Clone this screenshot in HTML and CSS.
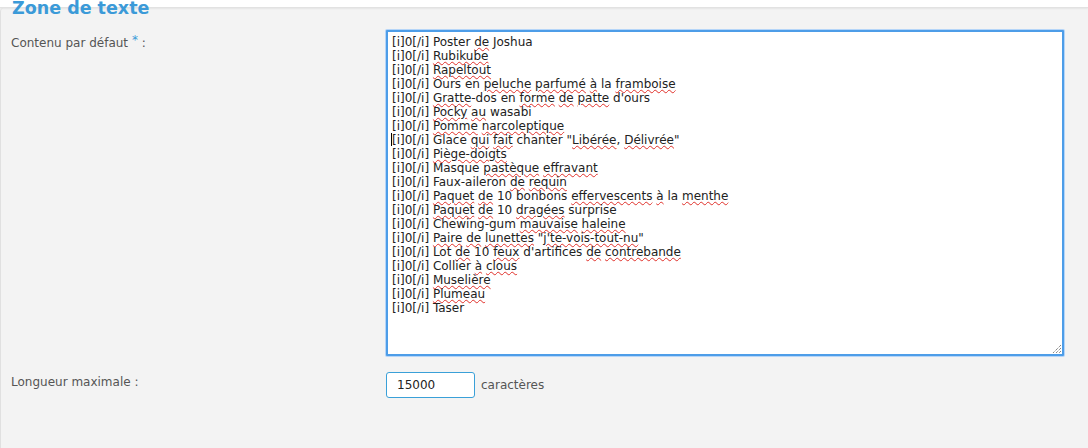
FILE: index.html
```html
<!DOCTYPE html>
<html lang="fr">
<head>
<meta charset="utf-8">
<title>Zone de texte</title>
<link rel="stylesheet" href="styles.css">
</head>
<body>
<div class="top"></div>
<fieldset class="box">
  <legend class="legend">Zone de texte</legend>
  <div class="row">
    <div class="label">Contenu par défaut <span class="req">*</span> :</div>
    <div class="field">
      <div class="area" role="textbox" aria-multiline="true">
<div>[i]0[/i] Poster <span class="sp">de</span> Joshua</div>
<div>[i]0[/i] <span class="sp">Rubikube</span></div>
<div>[i]0[/i] <span class="sp">Rapeltout</span></div>
<div>[i]0[/i] Ours en <span class="sp">peluche</span> <span class="sp">parfumé</span> <span class="sp">à</span> la <span class="sp">framboise</span></div>
<div>[i]0[/i] <span class="sp">Gratte</span>-dos en <span class="sp">forme</span> <span class="sp">de</span> <span class="sp">patte</span> d'ours</div>
<div>[i]0[/i] <span class="sp">Pocky</span> <span class="sp">au</span> wasabi</div>
<div>[i]0[/i] <span class="sp">Pomme</span> <span class="sp">narcoleptique</span></div>
<div><span class="caret"></span>[i]0[/i] Glace <span class="sp">qui</span> <span class="sp">fait</span> chanter "<span class="sp">Libérée</span>, <span class="sp">Délivrée</span>"</div>
<div>[i]0[/i] <span class="sp">Piège-doigts</span></div>
<div>[i]0[/i] Masque <span class="sp">pastèque</span> <span class="sp">effravant</span></div>
<div>[i]0[/i] Faux-aileron <span class="sp">de</span> <span class="sp">requin</span></div>
<div>[i]0[/i] <span class="sp">Paquet</span> <span class="sp">de</span> 10 bonbons <span class="sp">effervescents</span> <span class="sp">à</span> la <span class="sp">menthe</span></div>
<div>[i]0[/i] <span class="sp">Paquet</span> <span class="sp">de</span> 10 <span class="sp">dragées</span> surprise</div>
<div>[i]0[/i] Chewing-gum <span class="sp">mauvaise</span> <span class="sp">haleine</span></div>
<div>[i]0[/i] <span class="sp">Paire</span> <span class="sp">de</span> <span class="sp">lunettes</span> "<span class="sp">j'te-vois-tout-nu</span>"</div>
<div>[i]0[/i] Lot <span class="sp">de</span> 10 <span class="sp">feux</span> d'artifices <span class="sp">de</span> <span class="sp">contrebande</span></div>
<div>[i]0[/i] Collier <span class="sp">à</span> <span class="sp">clous</span></div>
<div>[i]0[/i] <span class="sp">Muselière</span></div>
<div>[i]0[/i] <span class="sp">Plumeau</span></div>
<div>[i]0[/i] Taser</div>
      </div>
      <svg class="grip" width="10" height="10" viewBox="0 0 10 10"><path d="M9 1 L1 9 M9 4 L4 9 M9 7 L7 9" stroke="#555" stroke-width="1" stroke-dasharray="1 1" fill="none"/></svg>
    </div>
  </div>
  <div class="row row2">
    <div class="label">Longueur maximale :</div>
    <div class="field2">
      <div class="num">15000</div>
      <span class="unit">caractères</span>
    </div>
  </div>
</fieldset>
</body>
</html>
```
FILE: styles.css
```css
html, body {
  margin: 0;
  padding: 0;
  background: #f3f3f3;
  font-family: "DejaVu Sans", Verdana, sans-serif;
}
body {
  width: 1088px;
  height: 448px;
  overflow: hidden;
  position: relative;
}
.top {
  height: 7px;
  background: #ffffff;
  border-bottom: 1px solid #e2e2e2;
  box-shadow: 0 1px 2px rgba(0,0,0,0.06);
}
.box {
  margin: -9px 0 0 0;
  padding: 0;
  border: none;
  border-left: 1px solid #e0e0e0;
  border-top-left-radius: 4px;
  min-width: 0;
  min-height: 460px;
  box-sizing: border-box;
}
.legend {
  padding: 0 2px;
  margin-left: 9px;
  font-size: 17.5px;
  font-weight: bold;
  color: #3b9ad8;
  line-height: 18px;
}
.row {
  display: flex;
}
.label {
  width: 375px;
  padding: 16px 0 0 10px;
  font-size: 12px;
  color: #555;
}
.req {
  color: #3b9ad8;
  vertical-align: 3px;
}
.field {
  position: relative;
  margin-top: 13px;
}
.area {
  width: 666px;
  height: 316px;
  border: 2px solid #4d9de8;
  border-radius: 1px;
  background: #fff;
  padding: 3px 4px;
  font-family: "DejaVu Sans", sans-serif;
  font-size: 12px;
  line-height: 14px;
  color: #222;
  box-shadow: 0 0 0 1px #b5d5f8;
}
.sp {
  text-decoration: underline wavy #e0302a;
  text-decoration-thickness: 1px;
  text-underline-offset: 1px;
}
.caret {
  display: inline-block;
  width: 1px;
  height: 13px;
  background: #000;
  vertical-align: -2px;
  margin-left: -1px;
}
.grip {
  position: absolute;
  right: 2px;
  bottom: 2px;
}
.row2 .label {
  padding-top: 19px;
}
.field2 {
  display: flex;
  align-items: center;
  margin-top: 16px;
  gap: 6px;
}
.num {
  width: 77px;
  height: 24px;
  border: 1px solid #3aa0d8;
  border-radius: 3px;
  background: #fff;
  padding-left: 10px;
  font-size: 12px;
  line-height: 24px;
  color: #222;
}
.unit {
  font-size: 12px;
  color: #555;
}
```
